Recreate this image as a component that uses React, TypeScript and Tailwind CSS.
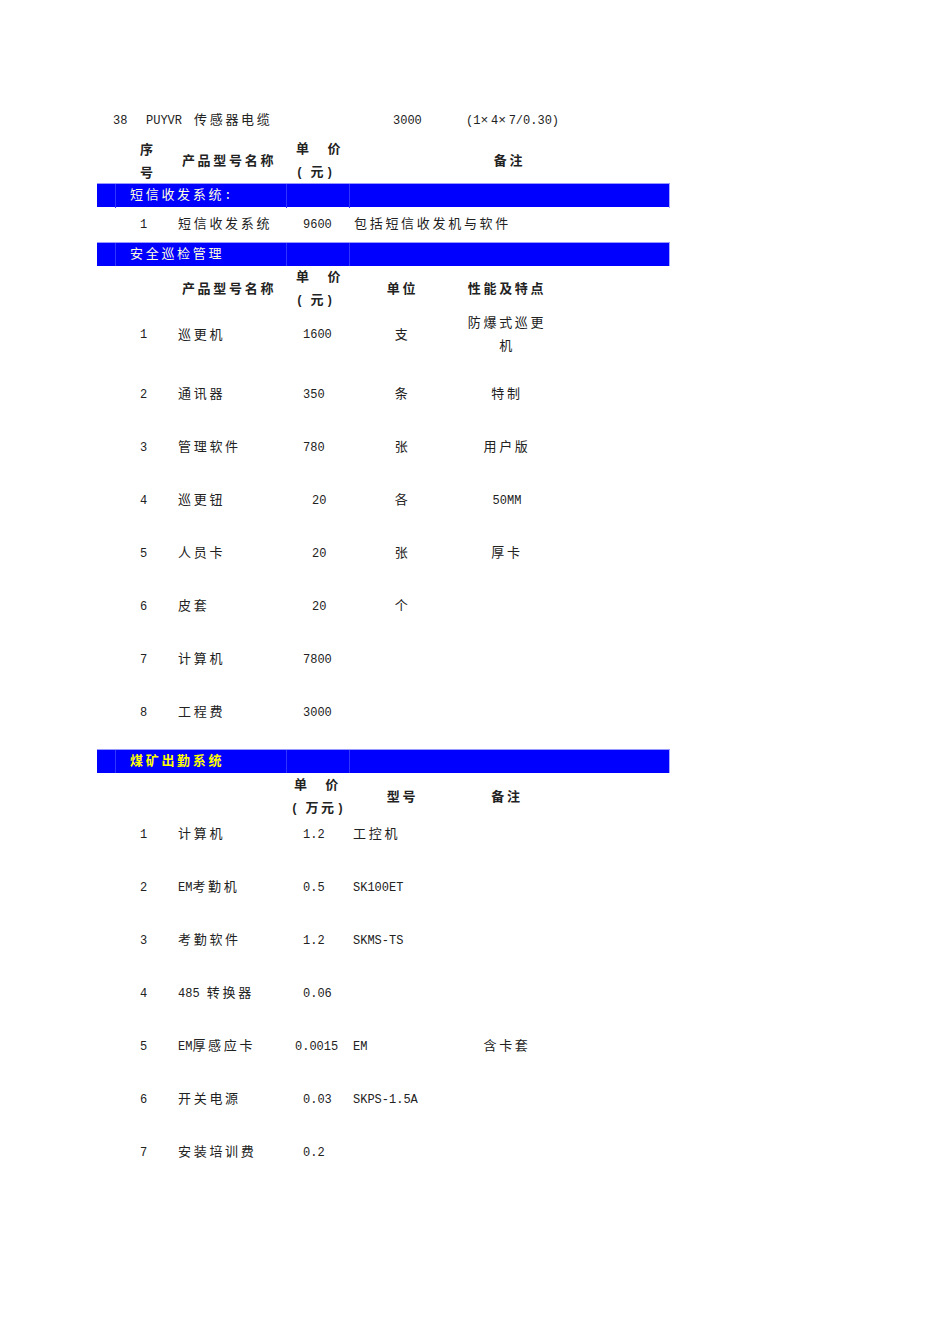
import React from "react"

const CJK = /[\u00d7\u3000-\u9fff\uff00-\uffef]/
const RUNS = /[\u00d7\u3000-\u9fff\uff00-\uffef]+|[^\u00d7\u3000-\u9fff\uff00-\uffef]+/g

// mixed text: latin runs in mono 12px, CJK runs letter-spaced
function T({ s }: { s: string }) {
  const parts = s.match(RUNS) ?? []
  return (
    <>
      {parts.map((p, i) =>
        CJK.test(p) ? (
          <span key={i} className="text-[13px] tracking-[2.7px]">
            {p}
          </span>
        ) : (
          <span key={i} className="text-[12px] whitespace-pre">
            {p}
          </span>
        )
      )}
    </>
  )
}

const grid = "grid grid-cols-[18px_57px_114px_63px_107px_102px_112px]"

function Bar({ label, strong }: { label: string; strong?: boolean }) {
  return (
    <div className={`${grid} h-[24px] bg-[#0000ff] border-t border-[#9999ff] items-center`}>
      <div className="h-full" />
      <div className="col-span-2 h-full border-l border-[#3333ff] flex items-center pl-[14px] whitespace-nowrap">
        <span className={strong ? "text-[#ffff00] font-bold" : "text-[#ffffdd]"}>
          <T s={label} />
        </span>
      </div>
      <div className="h-full border-l border-[#3333ff]" />
      <div className="col-span-3 h-full border-l border-[#3333ff] border-r border-r-[#aaaaff]" />
    </div>
  )
}

const patrol = [
  { n: "1", name: "巡更机", price: "1600", unit: "支", note: "" },
  { n: "2", name: "通讯器", price: "350", unit: "条", note: "特制" },
  { n: "3", name: "管理软件", price: "780", unit: "张", note: "用户版" },
  { n: "4", name: "巡更钮", price: "20", unit: "各", note: "50MM" },
  { n: "5", name: "人员卡", price: "20", unit: "张", note: "厚卡" },
  { n: "6", name: "皮套", price: "20", unit: "个", note: "" },
  { n: "7", name: "计算机", price: "7800", unit: "", note: "" },
  { n: "8", name: "工程费", price: "3000", unit: "", note: "" },
]

const attendance = [
  { n: "1", name: "计算机", price: "1.2", model: "工控机", note: "" },
  { n: "2", name: "EM考勤机", price: "0.5", model: "SK100ET", note: "" },
  { n: "3", name: "考勤软件", price: "1.2", model: "SKMS-TS", note: "" },
  { n: "4", name: "485 转换器", price: "0.06", model: "", note: "" },
  { n: "5", name: "EM厚感应卡", price: "0.0015", model: "EM", note: "含卡套" },
  { n: "6", name: "开关电源", price: "0.03", model: "SKPS-1.5A", note: "" },
  { n: "7", name: "安装培训费", price: "0.2", model: "", note: "" },
]

function pricePad(p: string) {
  if (p === "20") return "pl-[26px]"
  if (p === "0.0015") return "pl-[9px]"
  return "pl-[17px]"
}

export default function App() {
  return (
    <div
      className="w-[950px] min-h-[1344px] bg-white text-[#222] leading-[23px]"
      style={{ fontFamily: '"Liberation Mono", "Noto Sans CJK SC", monospace' }}
    >
      <div className="pt-[103px] pl-[97px] w-[670px]">
        {/* leftover row from previous page */}
        <div className="h-[35px] flex items-center pl-[16px] whitespace-nowrap">
          <span className="w-[33px]"><T s="38" /></span>
          <span className="w-[48px]"><T s="PUYVR" /></span>
          <span className="w-[199px]"><T s="传感器电缆" /></span>
          <span className="w-[73px]"><T s="3000" /></span>
          <span><T s="(1×4×7/0.30)" /></span>
        </div>

        {/* header 1 */}
        <div className={`${grid} h-[45px] items-center font-bold`}>
          <div />
          <div className="flex flex-col pl-[25px]">
            <T s="序" />
            <T s="号" />
          </div>
          <div className="text-center whitespace-nowrap"><T s="产品型号名称" /></div>
          <div className="flex flex-col pl-[10px] whitespace-nowrap">
            <span><T s="单　价" /></span>
            <span><T s="( 元)" /></span>
          </div>
          <div className="col-span-3 text-center"><T s="备注" /></div>
        </div>

        <Bar label="短信收发系统:" />

        <div className={`${grid} h-[35px] items-center whitespace-nowrap`}>
          <div />
          <div className="text-center"><T s="1" /></div>
          <div className="pl-[6px]"><T s="短信收发系统" /></div>
          <div className="pl-[17px]"><T s="9600" /></div>
          <div className="col-span-3 pl-[5px]"><T s="包括短信收发机与软件" /></div>
        </div>

        <Bar label="安全巡检管理" />

        {/* header 2 */}
        <div className={`${grid} h-[46px] items-center font-bold whitespace-nowrap`}>
          <div />
          <div />
          <div className="text-center"><T s="产品型号名称" /></div>
          <div className="flex flex-col pl-[10px]">
            <span><T s="单　价" /></span>
            <span><T s="( 元)" /></span>
          </div>
          <div className="text-center"><T s="单位" /></div>
          <div className="text-center"><T s="性能及特点" /></div>
          <div />
        </div>

        {patrol.map((r, i) => (
          <div
            key={r.n}
            className={`${grid} items-center whitespace-nowrap ${i === 0 ? "h-[56px] pb-[10px]" : "h-[53px]"}`}
          >
            <div />
            <div className="text-center"><T s={r.n} /></div>
            <div className="pl-[6px]"><T s={r.name} /></div>
            <div className={pricePad(r.price)}><T s={r.price} /></div>
            <div className="text-center"><T s={r.unit} /></div>
            <div className="text-center flex flex-col">
              {i === 0 ? (
                <>
                  <span><T s="防爆式巡更" /></span>
                  <span><T s="机" /></span>
                </>
              ) : (
                <span><T s={r.note} /></span>
              )}
            </div>
            <div />
          </div>
        ))}

        <div className="h-[10px]" />

        <Bar label="煤矿出勤系统" strong />

        {/* header 3 */}
        <div className={`${grid} h-[48px] items-center font-bold whitespace-nowrap`}>
          <div />
          <div />
          <div />
          <div className="flex flex-col text-center">
            <span><T s="单　价" /></span>
            <span><T s="( 万元)" /></span>
          </div>
          <div className="text-center"><T s="型号" /></div>
          <div className="text-center"><T s="备注" /></div>
          <div />
        </div>

        {attendance.map((r) => (
          <div key={r.n} className={`${grid} h-[53px] items-start pt-[2px] whitespace-nowrap`}>
            <div />
            <div className="text-center"><T s={r.n} /></div>
            <div className="pl-[6px]"><T s={r.name} /></div>
            <div className={pricePad(r.price)}><T s={r.price} /></div>
            <div className="pl-[4px]"><T s={r.model} /></div>
            <div className="text-center"><T s={r.note} /></div>
            <div />
          </div>
        ))}
      </div>
    </div>
  )
}
